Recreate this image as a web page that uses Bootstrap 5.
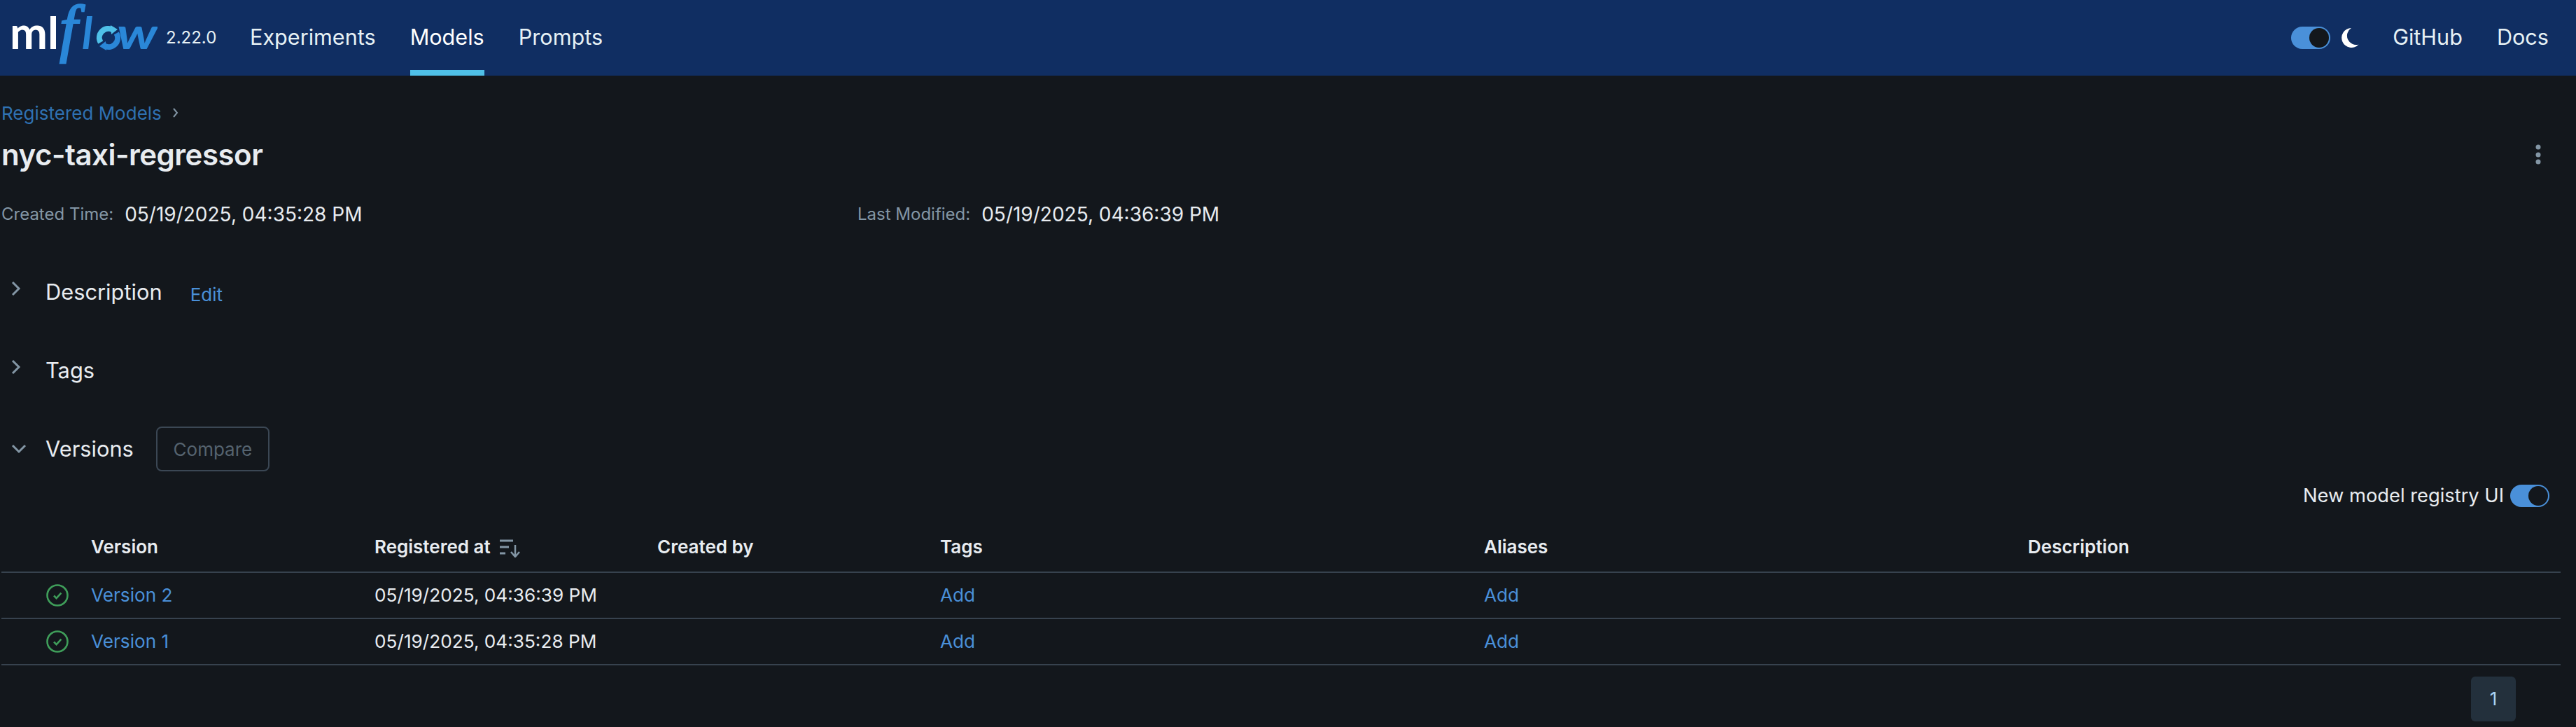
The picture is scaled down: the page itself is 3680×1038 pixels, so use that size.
<!DOCTYPE html>
<html lang="en" data-bs-theme="dark">
<head>
<meta charset="utf-8">
<title>nyc-taxi-regressor - MLflow</title>
<link href="https://cdn.jsdelivr.net/npm/bootstrap@5.3.0/dist/css/bootstrap.min.css" rel="stylesheet">
<style>
html,body{height:1038px;overflow:hidden}
body{background:#13171c;color:#e8ecf0;font-family:Inter,"Liberation Sans",sans-serif;font-size:26px}
a{text-decoration:none}
.top-bar{background:#102e62;height:108px}
.brand-logo{width:225px;height:108px;display:block;flex:none}
.ver-num{font-size:24px;color:#e6f1f5;margin:38px 0 0 12px;line-height:32px;width:74px}
.top-link{color:#e6f1f5;font-size:30.6px;line-height:106px;height:108px;display:block;padding:0}
.top-link:hover{color:#fff}
.top-link.on{color:#fff;box-shadow:inset 0 -8px 0 #4fc0e8}
.main-links{margin-left:46px;gap:49px}
.right-side{margin-right:39px}
.right-links{gap:49px}
.mode-wrap{gap:16px;margin-right:48px}
.sw-track{width:56px;height:32px;border-radius:16px;background:#4a90d9;position:relative;display:block;flex:none}
.sw-track::after{content:"";position:absolute;right:2px;top:2px;width:28px;height:28px;border-radius:50%;background:#13171c}
.page-body{padding:0 22px 0 2px}
.crumb-row{margin-top:37px;height:32px;font-size:26px;gap:15px;color:#8396a5}
.crumb-row a{color:#2f71b2}
.name-row{margin-top:16px;height:56px}
.name-row h1{font-size:42px;font-weight:600;margin:0;line-height:56px;color:#e8ecf0;letter-spacing:-.5px}
.kebab{margin-right:28px}
.meta-row{margin-top:39px;height:36px}
.meta-cell{width:1223px;gap:16px}
.meta-key{font-size:24px;color:#8396a5}
.meta-val{font-size:28px;color:#e8ecf0}
.sect-row{height:64px;margin-top:48px}
.sect-row.first{margin-top:61px}
.sect-name{font-size:30.8px;color:#e8ecf0}
.chev-box{width:63px;flex:none;padding-left:14px;display:flex;align-items:center}
.chev-box.up{margin-bottom:10px}
.edit-link{font-size:26px;color:#4a90d9;margin-left:40px;margin-top:6px}
.cmp-btn{--bs-btn-font-size:26px;--bs-btn-color:#55636f;--bs-btn-border-color:#3b4754;--bs-btn-border-width:2px;--bs-btn-disabled-color:#55636f;--bs-btn-disabled-border-color:#3b4754;--bs-btn-disabled-opacity:1;--bs-btn-border-radius:8px;height:64px;width:162px;margin-left:32px;padding:0}
.ui-row{margin-top:19px;height:32px;padding-right:16px;gap:9px;color:#e8ecf0;font-size:27.3px}
.ver-table{--bs-table-bg:transparent;--bs-table-color:#e8ecf0;--bs-table-border-color:#37424e;table-layout:fixed;width:100%;margin:21px 0 0;border-top:0}
.ver-table>thead>tr>th{height:72px;padding:0;font-size:26px;font-weight:600;vertical-align:middle;border-bottom-width:2px;border-color:#37424e}
.ver-table>tbody>tr>td{height:66px;padding:0;vertical-align:middle;border-bottom-width:2px;border-color:#37424e;font-size:26.2px}
.ver-table a{color:#4a90d9}
.c-a{width:128px}.c-b{width:405px}.c-c{width:404px}.c-d{width:404px}.c-e{width:777px}.c-f{width:777px}
.sort-ico{margin-left:13px}
.stat-ico{display:block;margin-left:64px}
.pager-row{margin-top:16px;padding-right:64px}
.pager-row .page-link{width:64px;height:64px;padding:0;font-size:26px;line-height:64px;text-align:center;border:0;border-radius:8px;background:#23303c;color:#a9d3f5}
</style>
</head>
<body>
<nav class="navbar top-bar p-0 flex-nowrap">
  <div class="d-flex align-items-start">
    <svg class="brand-logo" viewBox="0 0 225 108" role="img" aria-label="mlflow">
      <text x="14" y="70" font-family="Lato, sans-serif" font-size="64" font-weight="700" fill="#fff" textLength="70" lengthAdjust="spacingAndGlyphs">ml</text>
      <text x="85" y="71" font-family="Liberation Serif, serif" font-style="italic" font-size="92" fill="#2a87d8" stroke="#2a87d8" stroke-width="2.4">f</text>
      <text x="117" y="70" font-family="Lato, sans-serif" font-style="italic" font-size="64" font-weight="700" fill="#2a87d8">l</text>
      <path d="M143.7 60.5A13 13 0 0 1 161.5 42.7" fill="none" stroke="#4fc0e8" stroke-width="8"/>
      <path d="M158 36l10 6-9 7z" fill="#4fc0e8"/>
      <path d="M166.3 47.5A13 13 0 0 1 148.5 65.3" fill="none" stroke="#2a87d8" stroke-width="8"/>
      <path d="M152 72l-10-6 9-7z" fill="#2a87d8"/>
      <text x="167" y="70" font-family="Lato, sans-serif" font-style="italic" font-size="62" font-weight="700" fill="#2a87d8" textLength="58" lengthAdjust="spacingAndGlyphs">w</text>
    </svg>
    <span class="ver-num">2.22.0</span>
    <div class="d-flex main-links">
      <a class="top-link" href="#">Experiments</a>
      <a class="top-link on" href="#">Models</a>
      <a class="top-link" href="#">Prompts</a>
    </div>
  </div>
  <div class="d-flex align-items-center right-side">
    <div class="d-flex align-items-center mode-wrap">
      <span class="sw-track"></span>
      <svg width="25" height="28" viewBox="0 0 25 28"><path d="M14 0A14 14 0 1 0 24.5 23.5A13 13 0 0 1 14 0Z" fill="#fff"/></svg>
    </div>
    <div class="d-flex right-links">
      <a class="top-link" href="#">GitHub</a>
      <a class="top-link" href="#">Docs</a>
    </div>
  </div>
</nav>
<main class="page-body">
  <div class="d-flex align-items-center crumb-row">
    <a href="#">Registered Models</a>
    <svg width="10" height="16" viewBox="0 0 10 16"><path d="M2 2l5 6-5 6" fill="none" stroke="#8396a5" stroke-width="2"/></svg>
  </div>
  <div class="d-flex justify-content-between align-items-center name-row">
    <h1>nyc-taxi-regressor</h1>
    <svg class="kebab" width="8" height="30" viewBox="0 0 8 30"><circle cx="4" cy="4" r="3.5" fill="#8396a5"/><circle cx="4" cy="15" r="3.5" fill="#8396a5"/><circle cx="4" cy="25" r="3.5" fill="#8396a5"/></svg>
  </div>
  <div class="d-flex align-items-center meta-row">
    <div class="d-flex align-items-center meta-cell"><span class="meta-key">Created Time:</span><span class="meta-val">05/19/2025, 04:35:28 PM</span></div>
    <div class="d-flex align-items-center meta-cell"><span class="meta-key">Last Modified:</span><span class="meta-val">05/19/2025, 04:36:39 PM</span></div>
  </div>
  <div class="d-flex align-items-center sect-row first">
    <span class="chev-box up"><svg width="14" height="22" viewBox="0 0 14 22"><path d="M2 2l9 9-9 9" fill="none" stroke="#8396a5" stroke-width="3"/></svg></span>
    <span class="sect-name">Description</span><a class="edit-link" href="#">Edit</a>
  </div>
  <div class="d-flex align-items-center sect-row">
    <span class="chev-box up"><svg width="14" height="22" viewBox="0 0 14 22"><path d="M2 2l9 9-9 9" fill="none" stroke="#8396a5" stroke-width="3"/></svg></span>
    <span class="sect-name">Tags</span>
  </div>
  <div class="d-flex align-items-center sect-row">
    <span class="chev-box"><svg width="22" height="14" viewBox="0 0 22 14"><path d="M2 2l9 9 9-9" fill="none" stroke="#8396a5" stroke-width="3"/></svg></span>
    <span class="sect-name">Versions</span>
    <button type="button" class="btn cmp-btn" disabled>Compare</button>
  </div>
  <div class="d-flex justify-content-end align-items-center ui-row">
    <span>New model registry UI</span><span class="sw-track"></span>
  </div>
  <table class="table ver-table">
    <colgroup><col class="c-a"><col class="c-b"><col class="c-c"><col class="c-d"><col class="c-e"><col class="c-f"><col></colgroup>
    <thead>
      <tr><th></th><th>Version</th><th>Registered at<svg class="sort-ico" width="30" height="26" viewBox="0 0 30 26"><path d="M0 2h19M0 11h13M0 20h8" stroke="#8396a5" stroke-width="3"/><path d="M22 8v16M16 18l6 7 6-7" fill="none" stroke="#8396a5" stroke-width="2.5"/></svg></th><th>Created by</th><th>Tags</th><th>Aliases</th><th>Description</th></tr>
    </thead>
    <tbody>
      <tr><td><svg class="stat-ico" width="32" height="32" viewBox="0 0 32 32"><circle cx="16" cy="16" r="14.5" fill="none" stroke="#3f9e5a" stroke-width="2.6"/><path d="M11 16.5l3.6 3.6 6.8-7.4" fill="none" stroke="#3f9e5a" stroke-width="2.6"/></svg></td><td><a href="#">Version 2</a></td><td>05/19/2025, 04:36:39 PM</td><td></td><td><a href="#">Add</a></td><td><a href="#">Add</a></td><td></td></tr>
      <tr><td><svg class="stat-ico" width="32" height="32" viewBox="0 0 32 32"><circle cx="16" cy="16" r="14.5" fill="none" stroke="#3f9e5a" stroke-width="2.6"/><path d="M11 16.5l3.6 3.6 6.8-7.4" fill="none" stroke="#3f9e5a" stroke-width="2.6"/></svg></td><td><a href="#">Version 1</a></td><td>05/19/2025, 04:35:28 PM</td><td></td><td><a href="#">Add</a></td><td><a href="#">Add</a></td><td></td></tr>
    </tbody>
  </table>
  <div class="d-flex justify-content-end pager-row">
    <ul class="pagination m-0"><li class="page-item"><a class="page-link" href="#">1</a></li></ul>
  </div>
</main>
<script src="https://cdn.jsdelivr.net/npm/bootstrap@5.3.0/dist/js/bootstrap.bundle.min.js"></script>
</body>
</html>
